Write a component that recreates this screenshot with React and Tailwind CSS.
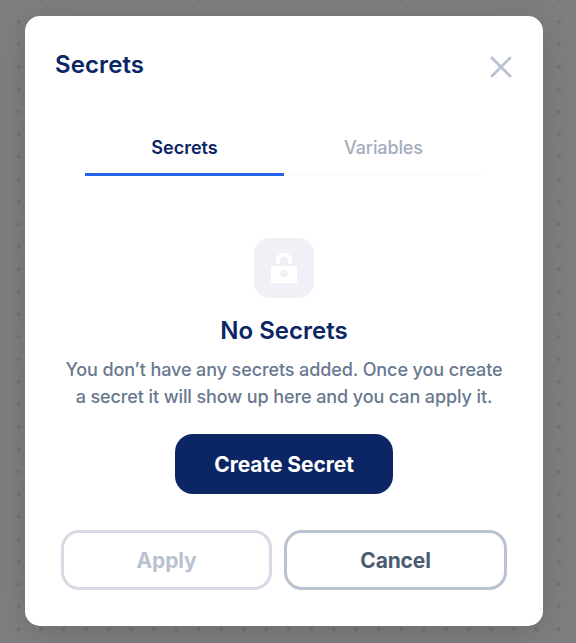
import React from "react";

function LockIcon() {
  return (
    <svg width="60" height="60" viewBox="0 0 60 60" fill="none">
      <path d="M24 26V22.7a6 6 0 0 1 12 0V26" stroke="white" strokeWidth="3.9" />
      <rect x="17" y="28" width="26" height="17.2" rx="1.8" fill="white" />
      <circle cx="30" cy="35.5" r="3.8" fill="#f0f1f6" />
    </svg>
  );
}

function CloseIcon() {
  return (
    <svg width="22" height="22" viewBox="0 0 22 22" fill="none">
      <path d="M2 2l18 18M20 2L2 20" stroke="#b9c2d0" strokeWidth="2.8" strokeLinecap="round" />
    </svg>
  );
}

export default function App() {
  return (
    <div className="h-[643px] w-[576px] overflow-hidden bg-[#7d7e80] bg-[radial-gradient(circle_at_11.25px_11.25px,#707174_1.6px,transparent_2.3px)] bg-[length:22.5px_22.5px] bg-[position:7.5px_-12px] pl-[25px] pt-4 font-['Inter',sans-serif]">
      <div className="flex h-[610px] w-[518px] flex-col rounded-[15px] bg-white shadow-[0_6px_30px_rgba(0,0,0,0.13)]">
        <header className="flex h-[102px] items-start justify-between pl-[30px] pr-[31px] pt-8">
          <h1 className="text-[24px] font-semibold leading-[34px] tracking-[0.1px] text-[#0b2565]">Secrets</h1>
          <button className="mt-2" aria-label="Close"><CloseIcon /></button>
        </header>
        <nav className="mx-[60px] flex h-[58px] text-[18px] leading-[26px]">
          <button className="w-[199px] border-b-[3px] border-[#2463eb] pb-[11px] pt-[15px] font-semibold text-[#0b2565]">Secrets</button>
          <button className="w-[199px] border-b border-[#f8f9fa] pb-[13px] pt-[15px] font-medium tracking-[-0.12px] text-[#a1adbd]">Variables</button>
        </nav>
        <section className="flex flex-col items-center pt-[62px]">
          <div className="size-[60px] rounded-[15px] bg-[#f0f1f6]"><LockIcon /></div>
          <h2 className="mt-4 text-[24px] font-semibold leading-[34px] text-[#0b2565]">No Secrets</h2>
          <p className="mt-2 whitespace-nowrap text-center text-[18px] font-medium leading-[27px] tracking-[-0.1px] text-[#68788f]">
            You don’t have any secrets added. Once you create<br />a secret it will show up here and you can apply it.
          </p>
          <button className="mt-6 h-[60px] w-[218px] rounded-[18px] bg-[#0b2565] pt-0.5 text-[21px] font-bold tracking-[-0.05px] text-white">Create Secret</button>
        </section>
        <footer className="mt-9 flex gap-3 pl-9">
          <button className="h-[60px] w-[211px] rounded-[18px] border-[3px] border-[#d5dae4] pt-0.5 text-[21px] font-bold tracking-[-0.15px] text-[#b9c2d0]">Apply</button>
          <button className="h-[60px] w-[223px] rounded-[18px] border-[3px] border-[#b9c2d0] pt-0.5 text-[21px] font-bold tracking-[-0.15px] text-[#4b5b73]">Cancel</button>
        </footer>
      </div>
    </div>
  );
}
